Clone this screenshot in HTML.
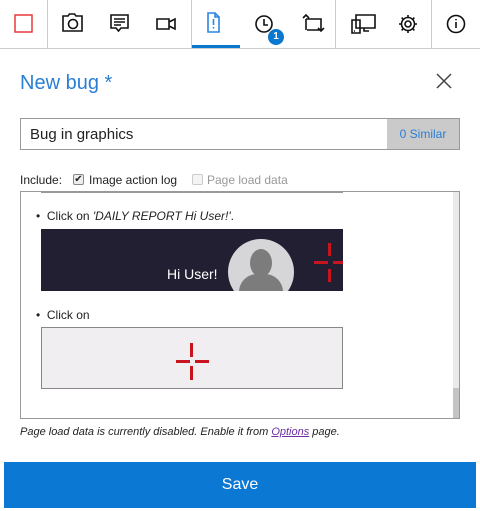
<!DOCTYPE html>
<html><head><style>
*{margin:0;padding:0;box-sizing:border-box}
body{width:480px;height:511px;background:#fff;font-family:"Liberation Sans",sans-serif;position:relative;overflow:hidden;color:#222}
.a{position:absolute}
svg{position:absolute}
</style></head><body>
<div class="a" style="left:0;top:48px;width:480px;height:1px;background:#ccc"></div>
<div class="a" style="left:47px;top:0;width:1px;height:48px;background:#ccc"></div>
<div class="a" style="left:191px;top:0;width:1px;height:48px;background:#ccc"></div>
<div class="a" style="left:335px;top:0;width:1px;height:48px;background:#ccc"></div>
<div class="a" style="left:431px;top:0;width:1px;height:48px;background:#ccc"></div>
<div class="a" style="left:192px;top:45px;width:48px;height:3px;background:#0b78d0"></div>
<svg width="480" height="48" fill="none" stroke="#111" stroke-width="1.6">
<rect x="15" y="15" width="17" height="17" stroke="#e8383d" stroke-width="1.5"/>
<path d="M63 16h5l1.5-2h5l1.5 2h6v15h-19z"/><circle cx="73" cy="24" r="4.5"/>
<path d="M111 15h17v13h-7l-2.5 3-2.5-3h-5z M114 19h11 M114 22h11 M114 25h7"/>
<path d="M157 19h12v10h-12z M169 22l6-3v10l-6-3"/>
<path d="M208 13h7l4 4v15h-11z M215 13v4h4 M213.5 19v6 M213.5 27v1.5" stroke="#2a87e0"/>
<circle cx="264" cy="24" r="8"/><path d="M264 19v6h4"/>
<path d="M306 19h15v11h-14 M306 19v11 M303 18l3-3 3 3 M318 28l3 3 3-3 M321 19v12"/>
<path d="M356 15h19v13h-19z M352 20h8v13h-8z M364 28v3h5 M354 31h1"/>
<circle cx="408" cy="24" r="3"/><path d="M408 15v2.5M408 30.5v2.5M399 24h2.5M414.5 24h2.5M401.6 17.6l1.8 1.8M412.6 28.6l1.8 1.8M401.6 30.4l1.8-1.8M412.6 19.4l1.8-1.8"/><circle cx="408" cy="24" r="6.5"/>
<circle cx="456" cy="24" r="8.5"/><path d="M456 22v6M456 19v1.2"/>
</svg>
<div class="a" style="left:268px;top:29px;width:16px;height:16px;border-radius:50%;background:#0b78d0;color:#fff;font-size:10px;font-weight:bold;text-align:center;line-height:16px">1</div>
<div class="a" style="left:20px;top:72px;font-size:20px;color:#2a7fd4">New bug *</div>
<svg width="480" height="100" style="left:0;top:0"><path d="M437 74l14 14M451 74l-14 14" stroke="#444" stroke-width="1.5"/></svg>
<div class="a" style="left:20px;top:118px;width:440px;height:32px;border:1px solid #999"></div>
<div class="a" style="left:30px;top:126px;font-size:15px;color:#222">Bug in graphics</div>
<div class="a" style="left:387px;top:119px;width:72px;height:30px;background:#cacaca;color:#2a7fd4;font-size:12px;text-align:center;line-height:30px">0 Similar</div>
<div class="a" style="left:20px;top:173px;font-size:12px;color:#222">Include:</div>
<div class="a" style="left:73px;top:174px;width:11px;height:11px;border:1px solid #888;border-radius:2px;background:#eee;font-size:10px;line-height:9px;text-align:center">✔</div>
<div class="a" style="left:89px;top:173px;font-size:12px;color:#222">Image action log</div>
<div class="a" style="left:192px;top:174px;width:11px;height:11px;border:1px solid #ccc;border-radius:2px;background:#f4f4f4"></div>
<div class="a" style="left:207px;top:173px;font-size:12px;color:#999">Page load data</div>
<div class="a" style="left:20px;top:191px;width:440px;height:228px;border:1px solid #999"></div>
<div class="a" style="left:453px;top:192px;width:6px;height:226px;background:#eaeaea"></div>
<div class="a" style="left:453px;top:388px;width:6px;height:30px;background:#c4c4c4"></div>
<div class="a" style="left:41px;top:191px;width:302px;height:2px;background:#999"></div>
<div class="a" style="left:36px;top:209px;font-size:12px">•&nbsp; Click on <i>'DAILY REPORT Hi User!'</i>.</div>
<div class="a" style="left:41px;top:229px;width:302px;height:62px;background:#231f33;overflow:hidden">
<div class="a" style="left:187px;top:10px;width:66px;height:66px;border-radius:50%;background:#d6d6d8"></div>
<div class="a" style="left:209px;top:20px;width:22px;height:28px;border-radius:50%;background:#7c7c7c"></div>
<div class="a" style="left:198px;top:45px;width:44px;height:30px;border-radius:18px 18px 0 0;background:#7c7c7c"></div>
<div class="a" style="left:124px;top:37px;font-size:14px;color:#fff;background:#231f33;padding:0 2px">Hi User!</div>
<div class="a" style="left:273px;top:32px;width:14px;height:3px;background:#c8141e"></div>
<div class="a" style="left:292px;top:32px;width:10px;height:3px;background:#c8141e"></div>
<div class="a" style="left:287px;top:14px;width:3px;height:13px;background:#c8141e"></div>
<div class="a" style="left:287px;top:40px;width:3px;height:13px;background:#c8141e"></div>
</div>
<div class="a" style="left:36px;top:308px;font-size:12px">•&nbsp; Click on</div>
<div class="a" style="left:41px;top:327px;width:302px;height:62px;background:#f0eef0;border:1px solid #888">
<div class="a" style="left:134px;top:32px;width:14px;height:3px;background:#c8141e"></div>
<div class="a" style="left:153px;top:32px;width:14px;height:3px;background:#c8141e"></div>
<div class="a" style="left:148px;top:15px;width:3px;height:14px;background:#c8141e"></div>
<div class="a" style="left:148px;top:38px;width:3px;height:14px;background:#c8141e"></div>
</div>
<div class="a" style="left:20px;top:426px;font-size:11px;font-style:italic;color:#222">Page load data is currently disabled. Enable it from <span style="color:#6b2fa0;text-decoration:underline">Options</span> page.</div>
<div class="a" style="left:4px;top:462px;width:472px;height:46px;background:#0b78d4;color:#fff;font-size:16px;text-align:center;line-height:46px">Save</div>
</body></html>
